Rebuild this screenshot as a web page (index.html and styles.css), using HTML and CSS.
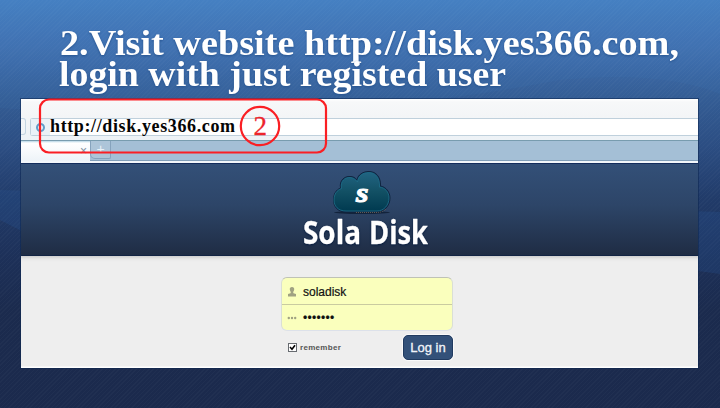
FILE: index.html
```html
<!DOCTYPE html>
<html lang="en">
<head>
<meta charset="utf-8">
<title>Sola Disk</title>
<link rel="stylesheet" href="styles.css">
</head>
<body>
<main class="slide">
  <svg class="waves" viewBox="0 0 720 408" aria-hidden="true">
    <path class="wave-light" d="M0 0H720V94Q660 70 560 80Q300 130 0 108Z"/>
    <path class="wave-low" d="M0 190L720 212V274Q600 255 420 300T0 220Z"/>
  </svg>
  <h1 class="title">
    <svg width="720" height="99" viewBox="0 0 720 99">
      <text x="60" y="55" textLength="619" lengthAdjust="spacingAndGlyphs">2.Visit website http://disk.yes366.com,</text>
      <text x="59" y="86" textLength="447" lengthAdjust="spacingAndGlyphs">login with just registed user</text>
    </svg>
  </h1>
  <section class="window">
    <div class="toolbar">
      <div class="nav-end"></div>
      <div class="address">
        <span class="site"><i class="ring"></i></span>
        <svg class="url" width="190" height="28" viewBox="0 0 190 28"><text x="0" y="19" textLength="185">http://disk.yes366.com</text></svg>
      </div>
    </div>
    <div class="tabs">
      <div class="tab">×</div>
      <div class="new-tab">+</div>
    </div>
    <header class="brand">
      <svg class="logo" width="64" height="46" viewBox="0 0 64 46">
        <defs>
          <linearGradient id="cloud" x1="0" y1="0" x2="0" y2="1">
            <stop offset="0" stop-color="#216482"/>
            <stop offset=".5" stop-color="#125064"/>
            <stop offset="1" stop-color="#003a50"/>
          </linearGradient>
        </defs>
        <ellipse class="cloud-shadow" cx="32" cy="43.500" rx="28" ry="1.500"/>
        <path class="cloud-outline" d="M16 43C8 43 3.500 38 3.500 31C3.500 25 6 21 10.500 19C9 11 15 7 20 7.500C23 7.500 25 8.500 27 11C28 5.500 33 2.500 39 2.500C46 2.500 51 8 50.500 17C56 18 60 23 60 29C60 37 54 43 47 43Z"/>
        <path class="cloud" fill="url(#cloud)" d="M16 42C8 42 4 37 4 31C4 25 7 21 11.500 19.500C10 12 15 8 20 8.500C23 8.500 25.500 10 27.500 13C28 6.500 33 3.500 39 3.500C46 3.500 50 9 49.500 18C55 18.500 59 23 59 29C59 36 54 42 47 42Z"/>
        <path class="cloud-base" d="M26 43.500H48Q53 43 56 40"/>
        <text class="cloud-s" x="26" y="32.500" textLength="12.500" lengthAdjust="spacingAndGlyphs">s</text>
      </svg>
      <svg class="name" width="136" height="40" viewBox="0 0 136 40">
        <text x="5" y="29" textLength="58" lengthAdjust="spacingAndGlyphs">Sola</text>
        <text x="71" y="29" textLength="59" lengthAdjust="spacingAndGlyphs">Disk</text>
      </svg>
    </header>
    <div class="content">
      <form class="login">
        <div class="fields">
          <div class="field">
            <svg width="10" height="10" viewBox="0 0 10 10"><path d="M5 0C6.600 0 7.400 1 7.200 2.500C7 4 6.200 4.500 6.200 5.500L6.500 6.200L9 7V9.500H1V7L3.500 6.200L3.800 5.500C3.800 4.500 3 4 2.800 2.500C2.600 1 3.400 0 5 0Z"/></svg>
            <span>soladisk</span>
          </div>
          <div class="field">
            <svg width="10" height="10" viewBox="0 0 10 10"><circle cx="1.800" cy="5" r="1.200"/><circle cx="5" cy="5" r="1.200"/><circle cx="8.200" cy="5" r="1.200"/></svg>
            <span class="secret">•••••••</span>
          </div>
        </div>
        <div class="actions">
          <div class="remember">
            <svg width="9" height="9" viewBox="0 0 9 9"><rect x=".5" y=".5" width="8" height="8"/><path d="M2 4L4 6.200L7 2.300"/></svg>
            <span>remember</span>
          </div>
          <div class="button">Log in</div>
        </div>
      </form>
    </div>
  </section>
  <svg class="callout" width="292" height="60" viewBox="0 0 292 60">
    <rect x="2" y="1.500" width="286" height="53" rx="9"/>
    <circle cx="222" cy="28" r="19.200"/>
    <text x="215.500" y="37" textLength="13">2</text>
  </svg>
</main>
</body>
</html>
```

FILE: styles.css
```css
* { box-sizing: border-box; }

body {
  margin: 0;
  font-family: "Liberation Sans", sans-serif;
}

.slide {
  position: relative;
  width: 720px;
  height: 408px;
  overflow: hidden;
  background:
    repeating-linear-gradient(135deg, rgba(255, 255, 255, .025) 0 1px, transparent 1px 3px),
    linear-gradient(#457fc1 0, #406fae 50px, #345d95 98px, #2c4e83 145px, #213b69 200px, #1d3058 260px, #1b2b4e 310px, #1b2a4d 408px);
}

.waves { position: absolute; inset: 0; }
.wave-light { fill: rgba(75, 140, 210, .07); }
.wave-low { fill: rgba(40, 90, 160, .22); }

.title {
  position: relative;
  height: 99px;
  margin: 0;
}

.title svg { display: block; }

.title text {
  font: bold 35px "Liberation Serif", serif;
  fill: #fff;
  filter: drop-shadow(0 1px 1px #24528f);
}

.window {
  position: relative;
  width: 677px;
  height: 269px;
  margin-left: 21px;
  background: #eee;
  box-shadow: 0 0 0 1px rgba(12, 38, 80, .55);
}

.toolbar {
  display: flex;
  gap: 4px;
  height: 42px;
  padding-top: 19px;
  background: linear-gradient(#fff 0, #f7f8f9 3px, #f3f5f7 18px, #edf2f6 40px);
  border-bottom: 1px solid #789caf;
}

.nav-end {
  width: 5px;
  height: 17px;
  border: 1px solid #c3d4e1;
  border-left: 0;
  border-radius: 0 3px 3px 0;
}

.address {
  display: flex;
  flex: 1;
  height: 18px;
  border: 1px solid #bfd0dc;
  border-right: 0;
  border-radius: 3px 0 0 3px;
  background: #fff;
}

.site {
  display: flex;
  align-items: center;
  justify-content: center;
  width: 19px;
  background: #eaf1f7;
}

.ring {
  width: 9px;
  height: 9px;
  border: 2px solid #609dca;
  border-radius: 50%;
}

.url {
  margin-top: -6px;
  overflow: visible;
}

.url text {
  font: bold 18px "Liberation Serif", serif;
  fill: #050505;
}

.tabs {
  display: flex;
  height: 22px;
  background: #a4bfd6;
  border-bottom: 2px solid #f2f7fb;
  box-shadow: inset 0 -1px #819fb9;
}

.tab {
  width: 69px;
  padding-right: 3px;
  background: linear-gradient(#b6d5e5 0, #fff 2px, #edf3f8 20px);
  color: #8191a2;
  font-size: 12px;
  line-height: 21px;
  text-align: right;
}

.new-tab {
  width: 21px;
  height: 18px;
  border: 1px solid #86a3bd;
  border-top: 0;
  border-radius: 0 0 2px 5px;
  background: #adc5d9;
  color: #e9f2f8;
  font-size: 14px;
  line-height: 17px;
  text-align: center;
}

.brand {
  display: flex;
  flex-direction: column;
  align-items: center;
  height: 93px;
  padding: 5px 0 0 12px;
  background: linear-gradient(#335078, #2d4568 45%, #1f2c44);
  border-top: 1px solid #132d5d;
  border-bottom: 1px solid #122444;
}

.logo { display: block; margin-left: -7px; flex: none; }
.cloud-outline { fill: #092c4f; stroke: #102540; stroke-width: 1px; }
.cloud { stroke: #20718b; stroke-width: .8px; }
.cloud-base { fill: none; stroke: #87725b; stroke-width: .7px; stroke-dasharray: 1 1; }
.cloud-shadow { fill: #12233b; }

.cloud-s {
  font: italic bold 27px "Liberation Serif", serif;
  fill: #fff;
  stroke: #fff;
  stroke-width: 1px;
}

.name { display: block; flex: none; }

.name text {
  font: bold 32px "Open Sans", sans-serif;
  fill: #fff;
  stroke: #fff;
  stroke-width: .3px;
  stroke-linejoin: round;
  filter: drop-shadow(0 1px 1px #071c3e);
}

.content {
  height: 112px;
  padding: 21px 0 0 260px;
  background: linear-gradient(#cfcfcf 0, #e8e8e8 3px, #eee 6px, #eee 110px, #fff 111px);
}

.login { width: 172px; }

.fields {
  height: 54px;
  overflow: hidden;
  border: 1px solid #cdd0b8;
  border-color: #bfc2b6 #dadfd5 #dce1ea;
  border-radius: 6px;
  background: #faffbd;
}

.field {
  display: flex;
  align-items: center;
  gap: 6px;
  height: 26px;
  padding: 2px 0 0 5px;
  color: #111;
  font-size: 12px;
  -webkit-text-stroke: .2px #111;
}

.field + .field { border-top: 1px solid #c9cba0; padding-top: 1px; }
.field svg { fill: #a0a282; }
.secret { letter-spacing: .3px; }

.actions {
  display: flex;
  align-items: flex-start;
  justify-content: space-between;
  padding: 4px 0 0 7px;
}

.remember {
  display: flex;
  align-items: center;
  gap: 3px;
  height: 23px;
  margin-top: 1px;
  color: #555;
  font: bold 8px "Liberation Sans", sans-serif;
  letter-spacing: .3px;
}

.remember svg { fill: #fff; stroke: #676b70; }
.remember path { fill: none; stroke: #000; stroke-width: 1.6px; }

.button {
  width: 50px;
  height: 25px;
  border: 1px solid #213b60;
  border-radius: 5px;
  background: #335179;
  box-shadow: 0 0 0 1px #fafafa;
  color: #f1f5fa;
  font-size: 13px;
  line-height: 23px;
  text-align: center;
  -webkit-text-stroke: .3px #f1f5fa;
}

.callout {
  position: absolute;
  left: 38px;
  top: 98px;
}

.callout rect,
.callout circle {
  fill: none;
  stroke: #fa1f24;
  stroke-width: 2.2px;
}

.callout text {
  font: 27px "Liberation Serif", serif;
  fill: #ed242b;
  stroke: #ed242b;
  stroke-width: .3px;
}
```
